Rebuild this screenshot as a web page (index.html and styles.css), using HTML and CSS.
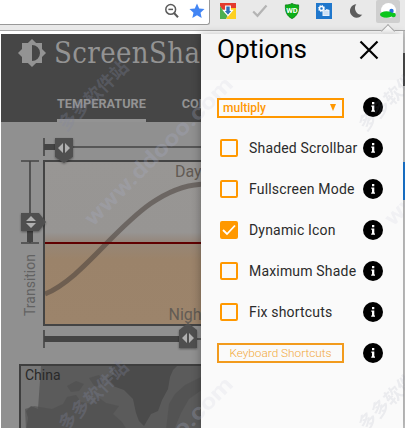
FILE: index.html
```html
<!DOCTYPE html>
<html lang="en">
<head>
    <meta charset="UTF-8">
    <meta name="viewport" content="width=device-width, initial-scale=1.0">
    <title>ScreenShader</title>
    <link rel="stylesheet" href="styles.css">
</head>
<body>
    <div class="toolbar">
        <div class="omnibox">
            <svg width="16" height="16" viewBox="0 0 16 16" fill="none" stroke="#5a5a5a" stroke-width="1.5">
                <circle cx="6.7" cy="6.4" r="4.9"/>
                <path d="M10 10l4 4.3" stroke-width="2"/>
                <path d="M4.4 6.4h4.6"/>
            </svg>
            <svg width="16" height="16" viewBox="0 0 16 16" fill="#4285f4">
                <path d="M8 .6l2.2 5 5.3.5-4 3.6 1.2 5.3L8 12.2 3.3 15l1.2-5.3-4-3.6 5.3-.5z"/>
            </svg>
        </div>
        <div class="extensions">
            <svg width="16" height="16" viewBox="0 0 16 16">
                <path fill="#e33b2e" d="M0 0h16v5H8L4 9 0 3z"/>
                <path fill="#4caf50" d="M0 3l5 7 3 2-2 4H0z"/>
                <path fill="#fdd023" d="M11 5h5v11H6l3-5z"/>
                <path fill="#2f70b8" stroke="#fff" stroke-width="1.2" d="M5.7 3h4.6v4.3h2.2L8 12.6 3.5 7.3h2.2z"/>
            </svg>
            <svg width="16" height="16" viewBox="0 0 16 16" fill="none" stroke="#b4b4b4" stroke-width="2.2">
                <path d="M1.2 8.5l4.3 4.3L14.5 2.5"/>
            </svg>
            <svg width="16" height="16" viewBox="0 0 16 16">
                <path fill="#0cb018" stroke="#087a10" stroke-width=".8" d="M8 .4c2 1.3 4 1.5 6.6 1.5C15 9 13 13 8 15.6 3 13 1 9 1.4 1.9 4 1.9 6 1.7 8 .4z"/>
                <text class="wd" x="8" y="10" text-anchor="middle">WD</text>
            </svg>
            <svg width="16" height="16" viewBox="0 0 16 16">
                <path fill="#1f77cc" d="M0 0h16v16H0z"/>
                <circle cx="5.5" cy="5.5" r="2" fill="none" stroke="#fff" stroke-width="1.5"/>
                <circle cx="5.5" cy="5.5" r="3.2" fill="none" stroke="#fff" stroke-width="1" stroke-dasharray="1.2 1.3"/>
                <path fill="#e8f1fb" d="M6.5 7.5l3-.5 1-1 3 1v6h-7z"/>
                <path stroke="#8ab8e6" stroke-width=".6" d="M7.5 9h5M7.5 11h5"/>
            </svg>
            <svg width="16" height="16" viewBox="0 0 16 16" fill="#5c5c5c">
                <path d="M8.3 1.3A6.7 6.7 0 1 0 14.3 11.6 6.5 6.5 0 0 1 8.3 1.3z"/>
            </svg>
            <div class="active-ext">
                <svg width="18" height="18" viewBox="0 0 18 18">
                    <circle cx="9.5" cy="8.5" r="7.5" fill="#fff"/>
                    <circle cx="12.5" cy="9" r="2.2" fill="#2470d8"/>
                    <ellipse cx="7.5" cy="12.5" rx="6.5" ry="3.2" fill="#0bc51c"/>
                    <circle cx="14.5" cy="13" r="2.3" fill="#0bc51c"/>
                </svg>
            </div>
        </div>
    </div>

    <div class="popup">
        <div class="app">
            <div class="app-header">
                <div class="brand">
                    <svg width="28" height="28" viewBox="0 0 28 28" fill="#939393">
                        <path fill-rule="evenodd" d="M14 0l4.1 4H24v5.9l4 4.1-4 4.1V24h-5.9L14 28l-4.1-4H4v-5.9L0 14l4-4.1V4h5.9zM14 6a8 8 0 1 1 0 16z"/>
                    </svg>
                    <span class="brand-name">ScreenSha</span>
                </div>
                <div class="tabs">
                    <span class="tab tab-active">TEMPERATURE</span>
                    <span class="tab">CONTROLS</span>
                </div>
            </div>

            <!-- temperature curve with its three sliders -->
            <svg class="chart" width="200" height="242" viewBox="1 122 200 242">
                <defs>
                    <linearGradient id="night" x1="0" y1="0" x2="0" y2="1">
                        <stop offset="0" stop-color="#968676"/>
                        <stop offset=".2" stop-color="#9b836a"/>
                        <stop offset="1" stop-color="#9c846b"/>
                    </linearGradient>
                    <linearGradient id="day" x1="0" y1="0" x2="0" y2="1">
                        <stop offset="0" stop-color="#989694"/>
                        <stop offset=".87" stop-color="#979593"/>
                        <stop offset="1" stop-color="#948578"/>
                    </linearGradient>
                    <filter id="soft" x="-30%" y="-30%" width="160%" height="160%">
                        <feDropShadow dx="0" dy="1" stdDeviation="1.2" flood-opacity=".4"/>
                    </filter>
                </defs>
                <rect x="45" y="161" width="160" height="82" fill="url(#day)"/>
                <rect x="45" y="243" width="160" height="82" fill="url(#night)"/>
                <path class="curve" d="M45 294C96 273 137 184 206 184"/>
                <path stroke="#600000" stroke-width="2" d="M45 243h156"/>
                <path class="frame" d="M201 161H44v164h157"/>
                <text class="chart-label" x="175" y="177">Day</text>
                <text class="chart-label" x="168.5" y="320">Nigh</text>
                <text class="axis-label" transform="translate(34.5 316) rotate(-90)" textLength="62">Transition</text>

                <path class="track" d="M44 147h157M44 138v18M30 161v82M21 161h18M21 243h18M44 339h157M44 330v18"/>
                <path class="track-fill" d="M44 147h12M30 230v12M44 339h136"/>
                <g filter="url(#soft)">
                    <path class="knob" d="M55 138h18v19l-9 6-9-6z"/>
                    <path class="knob" d="M21 213h18l7 9-7 9H21z"/>
                    <path class="knob" d="M179 348h18v-18l-9-7-9 7z"/>
                </g>
                <path fill="#b0b0b0" d="M63 143v10l-5-5zM65 143v10l5-5zM187 333v10l-5-5zM189 333v10l5-5zM26 221h10l-5-5zM26 223h10l-5 5z"/>
            </svg>

            <div class="map">
                <svg width="182" height="64" viewBox="0 0 182 64">
                    <path fill="#5b5b5b" d="M0 0h182v64H0z"/>
                    <path fill="#777" d="M0 0h20l-3 43-7-3-5 5 2 7-2 12H0z"/>
                    <path fill="#4b4b4b" d="M91 0h65l-4 4-3 7-2 12-6 11-4 11-7 3-7 12-5-5-3-8-3-14-9-9-11-4-6-7 7-5z"/>
                    <path fill="#4f4f4f" d="M4 43l9-3 18 3 11-5 4-7 9-2 5 7 12 2 5-7 8 6 13 3-6 8 9 8 5 8H5zM46 20l9-5 8 3-5 7-8 1zM68 12l10-3 5 8-9 4zM148 38l6-10 10-9 18-9v13l-14 10-8 14-7 17h-8z" opacity=".6"/>
                </svg>
                <span class="map-label">China</span>
            </div>
        </div>

        <div class="options">
            <div class="options-header">
                <span>Options</span>
                <svg width="20" height="20" viewBox="0 0 20 20" fill="none" stroke="#000" stroke-width="2.2">
                    <path d="M1.5 1.5l17 17M18.5 1.5l-17 17"/>
                </svg>
            </div>
            <div class="row">
                <div class="select"><span>multiply</span><svg width="6" height="7" viewBox="0 0 6 7" fill="#ff9800"><path d="M0 0h6L3 7z"/></svg></div>
                <span class="info"></span>
            </div>
            <div class="row">
                <span class="check"></span><span class="label">Shaded Scrollbar</span>
                <span class="info"></span>
            </div>
            <div class="row">
                <span class="check"></span><span class="label">Fullscreen Mode</span>
                <span class="info"></span>
            </div>
            <div class="row">
                <span class="check checked"><svg width="14" height="14" viewBox="0 0 14 14" fill="none" stroke="#fff" stroke-width="1.8"><path d="M1 7l4 4 8-8.5"/></svg></span><span class="label">Dynamic Icon</span>
                <span class="info"></span>
            </div>
            <div class="row">
                <span class="check"></span><span class="label">Maximum Shade</span>
                <span class="info"></span>
            </div>
            <div class="row">
                <span class="check"></span><span class="label">Fix shortcuts</span>
                <span class="info"></span>
            </div>
            <div class="row">
                <div class="shortcut-btn">Keyboard Shortcuts</div>
                <span class="info"></span>
            </div>
        </div>
        <div class="page-edge"></div>
    </div>

    <svg class="watermark" width="405" height="428" viewBox="0 0 405 428">
        <defs>
            <g id="mark">
                <text class="mark-cn" transform="translate(66 132) rotate(-45)" textLength="90">多多软件站</text>
                <text class="mark-url" transform="translate(93 227) rotate(-45)" textLength="200" lengthAdjust="spacingAndGlyphs">www.ddooo.com</text>
            </g>
            <clipPath id="left"><path d="M1 34h200v394H1z"/></clipPath>
            <clipPath id="right"><path d="M201 34h204v394H201z"/></clipPath>
        </defs>
        <g clip-path="url(#left)">
            <use href="#mark"/>
            <use href="#mark" y="300"/>
        </g>
        <g clip-path="url(#right)" opacity=".4">
            <use href="#mark"/>
            <use href="#mark" x="300"/>
            <use href="#mark" y="300"/>
            <use href="#mark" x="300" y="300"/>
        </g>
    </svg>

    <script>
        // same info badge on every option row
        document.querySelectorAll('.info').forEach(el => {
            el.innerHTML = '<svg width="20" height="20" viewBox="0 0 20 20"><circle cx="10" cy="10" r="10"/><path fill="#fff" d="M9 5h2.3v2.2H9zM8.3 8.5h3v5h.7v1.3H8.2v-1.3H9V9.7h-.7z"/></svg>';
        });
    </script>
</body>
</html>
```

FILE: styles.css
```css
body {
    margin: 0;
    width: 405px;
    height: 428px;
    overflow: hidden;
    position: relative;
    font-family: Roboto, "Noto Sans CJK SC", sans-serif;
    background-color: #fff;
}
svg {
    display: block;
    flex-shrink: 0;
}
.toolbar {
    display: flex;
    height: 31px;
    background-color: #e9e9e9;
    border-bottom: 1px solid #a9a9a9;
    box-sizing: border-box;
}
.omnibox {
    display: flex;
    justify-content: flex-end;
    align-items: flex-start;
    gap: 9px;
    width: 210px;
    height: 25px;
    padding: 3px 4px 0 0;
    box-sizing: border-box;
    background-color: #fff;
    border-right: 1px solid #999;
    border-bottom: 1px solid #999;
    border-bottom-right-radius: 3px;
}
.extensions {
    display: flex;
    align-items: flex-start;
    gap: 16px;
    padding: 3px 0 0 10px;
}
.active-ext {
    width: 24px;
    height: 23px;
    margin: -3px 0 0 -4px;
    padding: 2px 3px 0;
    box-sizing: border-box;
    background-color: #cfcfcf;
    border-radius: 2px;
}
.wd {
    font: bold 7.5px Roboto, sans-serif;
    fill: #fff;
}

.popup {
    display: flex;
    height: 394px;
    padding: 3px 0 0 1px;
    background-color: #fff;
    position: relative;
}
.popup::before {
    content: "";
    position: absolute;
    top: -5px;
    left: 383px;
    width: 9px;
    height: 9px;
    background-color: #fcfcfc;
    border: 1px solid #aaa;
    border-right: none;
    border-bottom: none;
    transform: rotate(45deg);
}
.app {
    width: 200px;
    overflow: hidden;
    background-color: #909090;
}
.app-header {
    height: 88px;
    background-color: #464646;
    color: #939393;
}
.brand {
    display: flex;
    align-items: center;
    gap: 8px;
    height: 37px;
    padding: 0 0 0 17px;
}
.brand-name {
    font-family: "DejaVu Serif Condensed", "DejaVu Serif", serif;
    font-stretch: condensed;
    font-size: 29px;
    letter-spacing: .4px;
    line-height: 37px;
    padding-top: 2px;
}
.tabs {
    display: flex;
    gap: 36px;
    height: 51px;
    padding-left: 56px;
}
.tab {
    height: 51px;
    box-sizing: border-box;
    padding-top: 24px;
    font-size: 12.7px;
    line-height: 17px;
    font-weight: bold;
}
.tab-active {
    border-bottom: 3px solid #939393;
}
.curve {
    fill: none;
    stroke: #48403a;
    stroke-opacity: .55;
    stroke-width: 5;
}
.frame {
    fill: none;
    stroke: #444;
    stroke-width: 2;
}
.chart-label {
    font-size: 16px;
    fill: #625b54;
}
.axis-label {
    font-size: 14px;
    fill: #626262;
}
.track {
    fill: none;
    stroke: #444;
    stroke-width: 1.6;
}
.track-fill {
    fill: none;
    stroke: #444;
    stroke-width: 6;
}
.knob {
    fill: #505050;
}
.map {
    position: relative;
    margin-left: 18px;
    border: 2px solid #3e3e3e;
    border-right: none;
    height: 64px;
}
.map-label {
    position: absolute;
    left: 4px;
    top: 0;
    font-size: 14px;
    line-height: 19px;
    color: #292929;
}

.options {
    width: 202px;
    background-color: #fafafa;
    box-shadow: -1px 0 8px rgba(0, 0, 0, .28);
    position: relative;
}
.options-header {
    display: flex;
    justify-content: space-between;
    align-items: flex-start;
    height: 46px;
    margin-bottom: 6px;
    padding: 0 24px 0 16px;
    box-sizing: border-box;
    background-color: #f5f5f5;
    font-size: 26px;
    line-height: 30px;
    color: #000;
}
.options-header svg {
    margin-top: 6px;
}
.row {
    display: flex;
    align-items: center;
    height: 41px;
    padding: 0 20px 0 16px;
}
.info {
    margin-left: auto;
}
.select {
    display: flex;
    justify-content: space-between;
    align-items: center;
    width: 127px;
    height: 20px;
    margin-top: 2px;
    padding: 0 6px 0 4px;
    box-sizing: border-box;
    border: 2px solid #ff9800;
    color: #ff9800;
    font-size: 12px;
    font-weight: 500;
    line-height: 16px;
}
.check {
    display: flex;
    align-items: center;
    justify-content: center;
    width: 18px;
    height: 18px;
    margin: 0 11px 0 3px;
    box-sizing: border-box;
    border: 2px solid #ff9800;
    border-radius: 2px;
    background-color: #fafafa;
}
.checked {
    background-color: #ff9800;
}
.label {
    font-size: 14px;
    letter-spacing: .18px;
    color: #2b2b2b;
    white-space: nowrap;
}
.shortcut-btn {
    width: 127px;
    height: 20px;
    box-sizing: border-box;
    border: 2px solid #f29b1d;
    color: #f2a93a;
    font-size: 11.8px;
    font-weight: 300;
    line-height: 16px;
    text-align: center;
}
.page-edge {
    width: 2px;
    margin-top: -3px;
    background: linear-gradient(#c4c4c4 22px, #4a4a4a 22px, #4a4a4a 55px, #c4c4c4 55px, #c4c4c4 131px, #1976d2 131px, #1976d2 169px, #c4c4c4 169px);
}

.watermark {
    position: absolute;
    left: 0;
    top: 0;
    pointer-events: none;
}
.mark-cn {
    font: bold 18px "Noto Sans CJK SC", sans-serif;
    fill: rgba(130, 134, 160, .3);
}
.mark-url {
    font: bold 22px Roboto, sans-serif;
    fill: rgba(170, 175, 200, .27);
}
```
